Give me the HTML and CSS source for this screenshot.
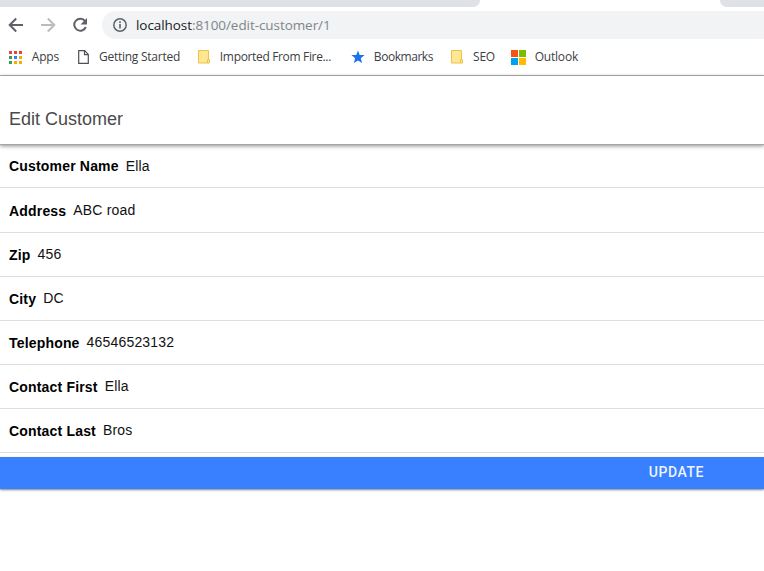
FILE: index.html
```html
<!DOCTYPE html>
<html lang="en">
<head>
<meta charset="utf-8">
<title>Edit Customer</title>
<link rel="stylesheet" href="styles.css">
</head>
<body>
<div class="browser">
  <div class="tabs"><div class="tab-left"></div><div class="tab-right"></div></div>
  <div class="toolbar">
    <svg class="nav back" width="16" height="16" viewBox="0 0 16 16"><path d="M15 8H2M8.2 1.5L1.7 8l6.5 6.5"/></svg>
    <svg class="nav forward" width="16" height="16" viewBox="0 0 16 16"><path d="M1 8h13M7.8 1.5L14.3 8l-6.5 6.5"/></svg>
    <svg class="nav reload" width="16" height="16" viewBox="0 0 16 16"><path d="M13.1 4.2A6 6 0 1 0 13.8 10"/><path class="fill" d="M15 1v6.5H8.5z"/></svg>
    <div class="address">
      <svg width="14" height="14" viewBox="0 0 14 14"><circle cx="7" cy="7" r="6.2" fill="none" stroke="#5f6368" stroke-width="1.5"/><path fill="#5f6368" d="M6.2 6h1.6v4.6H6.2zM6.2 3.3h1.6v1.6H6.2z"/></svg>
      <span class="url"><span class="host">localhost</span>:8100/edit-customer/1</span>
    </div>
  </div>
  <div class="bookmarks">
    <a class="bm apps"><svg width="13" height="13" viewBox="0 0 13 13"><path fill="#ea4335" d="M0 0h3v3H0zM5 0h3v3H5zM10 0h3v3h-3z"/><path fill="#34a053" d="M0 5h3v3H0zM0 10h3v3H0z"/><path fill="#2684fc" d="M5 5h3v3H5z"/><path fill="#fbaa00" d="M10 5h3v3h-3zM5 10h3v3H5zM10 10h3v3h-3z"/></svg><span>Apps</span></a>
    <a class="bm started"><svg width="11" height="14" viewBox="0 0 11 14"><path fill="#fff" stroke="#4d5156" stroke-width="1.2" d="M.7.7h6l3.6 3.7v8.9H.7zM6.5.7v4h3.8"/></svg><span>Getting Started</span></a>
    <a class="bm imported"><svg width="13" height="14" viewBox="0 0 13 14"><path fill="#ffe693" stroke="#e8c44c" d="M.5.5h10v9h1v3.5H.5zM9.5 13V9.5h1"/></svg><span>Imported From Fire...</span></a>
    <a class="bm marks"><svg width="14" height="14" viewBox="0 0 14 14"><path fill="#1a73e8" d="M7 .4l1.7 4.5 4.9.2-3.8 3.1 1.3 4.9L7 10.4l-4.1 2.7 1.3-4.9L.4 5.1l4.9-.2z"/></svg><span>Bookmarks</span></a>
    <a class="bm seo"><svg width="13" height="14" viewBox="0 0 13 14"><path fill="#ffe693" stroke="#e8c44c" d="M.5.5h10v9h1v3.5H.5zM9.5 13V9.5h1"/></svg><span>SEO</span></a>
    <a class="bm outlook"><svg width="15" height="15" viewBox="0 0 15 15"><path fill="#f65314" d="M0 0h7v7H0z"/><path fill="#7cbb00" d="M8 0h7v7H8z"/><path fill="#00a1f1" d="M0 8h7v7H0z"/><path fill="#ffbb00" d="M8 8h7v7H8z"/></svg><span>Outlook</span></a>
  </div>
</div>
<header class="header"><h1>Edit Customer</h1></header>
<main>
  <div class="row first"><b>Customer Name</b><span>Ella</span></div>
  <div class="row tall"><b>Address</b><span>ABC road</span></div>
  <div class="row"><b>Zip</b><span>456</span></div>
  <div class="row"><b>City</b><span>DC</span></div>
  <div class="row"><b>Telephone</b><span>46546523132</span></div>
  <div class="row"><b>Contact First</b><span>Ella</span></div>
  <div class="row"><b>Contact Last</b><span>Bros</span></div>
  <button class="update">UPDATE</button>
</main>
</body>
</html>
```
FILE: styles.css
```css
* { box-sizing: border-box; }
body { margin: 0; height: 571px; overflow: hidden; background: #fff; color: #000; font-family: "Liberation Sans", Arial, sans-serif; }
svg { display: block; flex: none; }
.browser { height: 76px; border-bottom: 1px solid #b1b1b3; font-family: "Open Sans", "Noto Sans", sans-serif; }
.tabs { display: flex; justify-content: space-between; height: 7px; }
.tab-left { width: 480px; background: #dee1e6; border-bottom-right-radius: 7px; }
.tab-right { width: 44px; background: #dee1e6; border-bottom-left-radius: 7px; }
.toolbar { display: flex; align-items: center; height: 36px; padding-left: 8px; }
.nav { fill: none; stroke: #5f6368; stroke-width: 2; }
.nav .fill { fill: #5f6368; stroke: none; }
.forward { margin-left: 16px; stroke: #babcbe; }
.reload { margin-left: 16px; }
.address { display: flex; align-items: center; flex: 1; height: 28px; margin-left: 14px; padding-left: 11px; background: #f1f3f4; border-radius: 14px 0 0 14px; }
.url { margin-left: 9px; font-size: 13.5px; line-height: 20px; letter-spacing: -0.07px; color: #80868b; white-space: nowrap; }
.host { color: #202124; }
.bookmarks { display: flex; height: 28px; }
.bm { display: flex; align-items: center; flex: none; font-size: 12px; line-height: 16px; letter-spacing: -0.2px; color: #3c4043; white-space: nowrap; }
.bm svg { margin-right: auto; }
.bm span { flex: none; }
.apps { width: 50px; margin-left: 9px; }
.started { width: 102px; margin-left: 19px; letter-spacing: -0.25px; }
.imported { width: 133px; margin-left: 18px; letter-spacing: -0.34px; }
.marks { width: 82px; margin-left: 20px; letter-spacing: -0.45px; }
.seo { width: 44px; margin-left: 18px; }
.outlook { width: 67px; margin-left: 16px; }
.header { height: 69px; padding: 32px 0 0 9px; border-bottom: 1px solid #a6a6a6; box-shadow: 0 1px 4px rgba(0,0,0,.45); }
h1 { margin: 0; font-size: 18px; line-height: 22px; font-weight: 400; color: #4a4a4a; }
.row { display: flex; height: 44px; padding: 12px 0 0 9px; border-bottom: 1px solid #dedede; font-size: 14px; line-height: 18px; white-space: nowrap; }
.first { height: 43px; }
.tall { height: 45px; padding-top: 13px; }
.row b { padding-top: 1px; margin-right: 7px; letter-spacing: .18px; }
.row span { letter-spacing: .18px; color: #111; }
.first b { padding-top: 0; }
.update { display: block; width: 100%; height: 32px; margin-top: 4px; padding: 0 60px 2px 0; border: 0; background: #3880ff; box-shadow: 0 1px 2px rgba(0,0,0,.5); color: #edf3ff; font: 500 14px/30px Roboto, sans-serif; text-align: right; letter-spacing: .55px; }
```
